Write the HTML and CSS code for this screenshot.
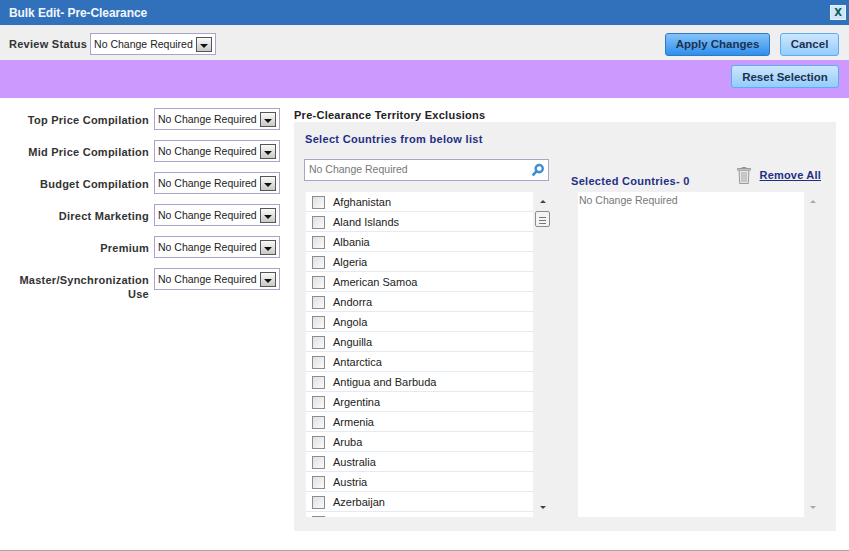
FILE: index.html
```html
<!DOCTYPE html>
<html lang="en">
<head>
<meta charset="utf-8">
<title>Bulk Edit- Pre-Clearance</title>
<link rel="stylesheet" href="styles.css">
</head>
<body>
<div class="page">
  <header class="titlebar">
    <span class="title">Bulk Edit- Pre-Clearance</span>
    <span class="close">X</span>
  </header>
  <div class="review">
    <span class="label-inline">Review Status</span>
    <div class="select select-review"><span>No Change Required</span><i class="drop"></i></div>
    <div class="spacer"></div>
    <button class="btn btn-primary btn-apply">Apply Changes</button>
    <button class="btn btn-cancel">Cancel</button>
  </div>
  <div class="purple">
    <button class="btn btn-reset">Reset Selection</button>
  </div>
  <main class="main">
    <section class="left">
      <div class="field"><label>Top Price Compilation</label><div class="select"><span>No Change Required</span><i class="drop"></i></div></div>
      <div class="field"><label>Mid Price Compilation</label><div class="select"><span>No Change Required</span><i class="drop"></i></div></div>
      <div class="field"><label>Budget Compilation</label><div class="select"><span>No Change Required</span><i class="drop"></i></div></div>
      <div class="field"><label>Direct Marketing</label><div class="select"><span>No Change Required</span><i class="drop"></i></div></div>
      <div class="field"><label>Premium</label><div class="select"><span>No Change Required</span><i class="drop"></i></div></div>
      <div class="field"><label>Master/Synchronization Use</label><div class="select"><span>No Change Required</span><i class="drop"></i></div></div>
    </section>
    <section class="right">
      <h2 class="section-title">Pre-Clearance Territory Exclusions</h2>
      <div class="panel">
        <div class="col-countries">
          <h3 class="blue-head">Select Countries from below list</h3>
          <div class="search">
            <span>No Change Required</span>
            <svg class="search-icon" width="14" height="14" viewBox="0 0 14 14"><circle cx="8.2" cy="5.6" r="3.6" fill="none" stroke="#3f8fd0" stroke-width="2.4"/><path d="M5.4 8.4 2.4 11.6" stroke="#3f8fd0" stroke-width="2.8" stroke-linecap="round"/></svg>
          </div>
          <div class="listbox">
            <ul class="list">
              <li><i class="check"></i>Afghanistan</li>
              <li><i class="check"></i>Aland Islands</li>
              <li><i class="check"></i>Albania</li>
              <li><i class="check"></i>Algeria</li>
              <li><i class="check"></i>American Samoa</li>
              <li><i class="check"></i>Andorra</li>
              <li><i class="check"></i>Angola</li>
              <li><i class="check"></i>Anguilla</li>
              <li><i class="check"></i>Antarctica</li>
              <li><i class="check"></i>Antigua and Barbuda</li>
              <li><i class="check"></i>Argentina</li>
              <li><i class="check"></i>Armenia</li>
              <li><i class="check"></i>Aruba</li>
              <li><i class="check"></i>Australia</li>
              <li><i class="check"></i>Austria</li>
              <li><i class="check"></i>Azerbaijan</li>
              <li><i class="check"></i></li>
            </ul>
            <div class="scroll">
              <i class="arrow-up"></i>
              <div class="thumb"></div>
              <div class="spacer"></div>
              <i class="arrow-down"></i>
            </div>
          </div>
        </div>
        <div class="col-selected">
          <div class="selected-head">
            <h3 class="blue-head selected-title">Selected Countries- 0</h3>
            <div class="remove">
              <svg width="14" height="17" viewBox="0 0 14 17"><path d="M5 1.5V.5h4v1M.5 1.5h13v1.6H.5z" fill="#efefef" stroke="#9a9a9a"/><path d="M2 3.2 2.7 16.5h8.6L12 3.2z" fill="#e6e6e6" stroke="#9a9a9a"/><path d="M5 5v10M7 5v10M9 5v10" stroke="#a8a8a8"/></svg>
              <a class="remove-link" href="#">Remove All</a>
            </div>
          </div>
          <div class="listbox selected-box">
            <div class="selected-body">No Change Required</div>
            <div class="scroll scroll-narrow">
              <i class="arrow-up arrow-muted"></i>
              <div class="spacer"></div>
              <i class="arrow-down arrow-muted"></i>
            </div>
          </div>
        </div>
      </div>
    </section>
  </main>
</div>
</body>
</html>
```
FILE: styles.css
```css
* { box-sizing: border-box; }
html, body { margin: 0; padding: 0; background: #fff; }
body { font-family: "Liberation Sans", Arial, sans-serif; font-size: 12px; color: #222; }
.page { width: 849px; height: 551px; display: flex; flex-direction: column; border-bottom: 1px solid #aaa; overflow: hidden; }

.titlebar { height: 25px; background: #3171bb; display: flex; align-items: center; justify-content: space-between; padding: 0 3px 0 9px; }
.title { color: #f2f6fb; font-weight: bold; font-size: 12px; letter-spacing: -.08px; }
.close { width: 16px; height: 15px; background: #cfe6f7; border: 1px solid #e6f2fb; color: #0b5c5c; font-weight: bold; font-size: 10px; display: flex; align-items: center; justify-content: center; font-family: "DejaVu Sans", sans-serif; }

.review { height: 35px; background: #efefef; display: flex; align-items: center; padding: 3px 10px 0 9px; }
.label-inline { font-weight: bold; font-size: 11px; color: #333; margin-right: 3px; letter-spacing: .27px; }
.spacer { flex: 1; }

.select { width: 126px; height: 22px; border: 1px solid #a6a6c9; background: #fff; display: flex; align-items: center; justify-content: space-between; padding: 0 3px 0 3px; font-size: 10.5px; color: #222; white-space: nowrap; }
.select span { padding-bottom: 1px; }
.drop { width: 16px; height: 15px; margin-top: 1px; border: 1px solid #555; background: linear-gradient(#fafafa, #c8c8c8); display: flex; align-items: center; justify-content: center; }
.drop::after { content: ""; border-left: 4px solid transparent; border-right: 4px solid transparent; border-top: 4px solid #111; margin-top: 2px; }

.btn { font-family: inherit; font-weight: bold; font-size: 11.5px; color: #1d3150; border: 1px solid #56aef3; border-radius: 3px; height: 23px; padding: 0; background: linear-gradient(#cde6fd, #94ccfb); }
.btn-primary { background: linear-gradient(#85c3f8, #2e8fee); border-color: #2e78c4; }
.btn-apply { width: 105px; margin-right: 10px; }
.btn-cancel { width: 59px; }

.purple { height: 38px; background: #cc99ff; display: flex; justify-content: flex-end; padding: 5px 10px 0 0; }
.btn-reset { width: 108px; }

.main { flex: 1; display: flex; padding: 0 13px 0 0; min-height: 0; }
.left { width: 294px; padding-top: 10px; padding-right: 14px; }
.field { height: 32px; display: flex; justify-content: flex-end; align-items: flex-start; gap: 5px; }
.field label { width: 140px; text-align: right; font-weight: bold; font-size: 11px; color: #333; line-height: 14px; padding-top: 5px; letter-spacing: .25px; }
.right { flex: 1; display: flex; flex-direction: column; }
.section-title { margin: 0; font-size: 11px; line-height: 14px; font-weight: bold; color: #222; padding-top: 10px; height: 24px; letter-spacing: .26px; }
.panel { width: 542px; height: 409px; background: #f0f0f0; display: flex; padding: 0 0 0 10px; }
.blue-head { margin: 0; font-size: 11px; font-weight: bold; color: #1f2f86; letter-spacing: .32px; }
.col-countries { width: 247px; }
.col-countries .blue-head { padding: 10px 0 0 1px; height: 37px; line-height: 14px; }
.search { height: 22px; width: 245px; border: 1px solid #a6a6c9; background: #fff; display: flex; align-items: center; justify-content: space-between; padding: 0 3px 0 4px; color: #777; font-size: 10.5px; }
.search span { padding-bottom: 2px; }
.listbox { height: 327px; display: flex; margin-top: 10px; background: #eef1f6; padding: 1px 0 1px 2px; }
.list { list-style: none; margin: 0; padding: 0; width: 227px; overflow: hidden; background: #fff; }
.list li { height: 20px; border-bottom: 1px solid #e4eaf4; display: flex; align-items: center; font-size: 11px; color: #222; padding-left: 6px; }
.check { width: 13px; height: 13px; border: 1px solid #8c8c8c; background: linear-gradient(135deg, #e0e0e0, #fafafa); margin: 1px 8px 0 0; flex: none; }
.scroll { width: 16px; margin-left: 2px; display: flex; flex-direction: column; align-items: center; padding: 8px 0; background: #f0f0f0; }
.arrow-up { border-left: 3px solid transparent; border-right: 3px solid transparent; border-bottom: 3px solid #444; }
.arrow-down { border-left: 3px solid transparent; border-right: 3px solid transparent; border-top: 3px solid #444; }
.arrow-muted { border-top-color: #aaa; border-bottom-color: #aaa; }
.thumb { width: 15px; height: 16px; margin-top: 8px; align-self: flex-start; border: 1px solid #8c8c8c; border-radius: 2px; background: repeating-linear-gradient(#f4f4f4 0 2px, #777 2px 3px) center / 7px 9px no-repeat #f4f4f4; }

.col-selected { width: 243px; margin-left: 27px; }
.selected-head { height: 69px; display: flex; justify-content: space-between; align-items: flex-end; }
.selected-title { margin-left: -7px; line-height: 14px; padding-bottom: 3px; letter-spacing: .3px; }
.remove { display: flex; align-items: center; gap: 8px; height: 18px; margin-bottom: 7px; }
.remove-link { color: #1f2f86; font-weight: bold; font-size: 11px; letter-spacing: .2px; }
.selected-box { margin-top: 0; padding-left: 0; }
.selected-body { width: 226px; background: #fff; color: #777; font-size: 10.5px; padding: 2px 1px; }
.scroll-narrow { width: 14px; }
```
